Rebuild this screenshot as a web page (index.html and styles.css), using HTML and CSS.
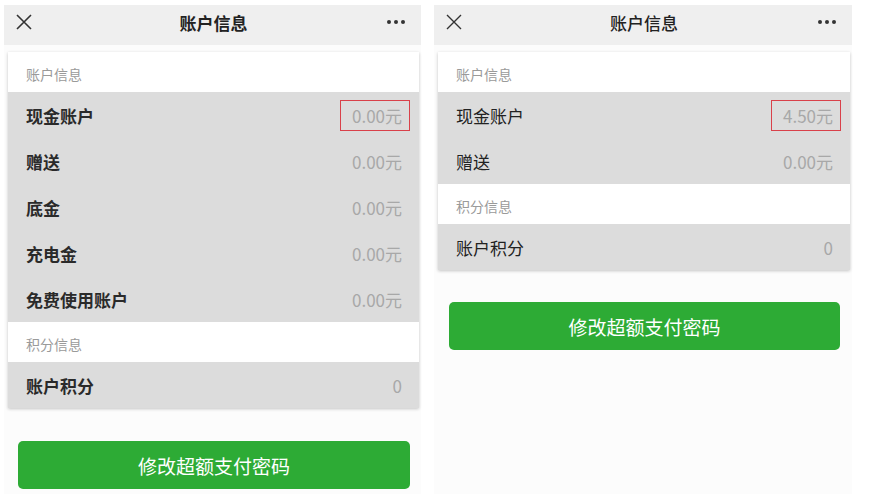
FILE: index.html
```html
<!DOCTYPE html>
<html lang="zh-CN">
<head>
    <meta charset="UTF-8">
    <meta name="viewport" content="width=device-width, initial-scale=1.0">
    <title>账户信息</title>
    <link rel="stylesheet" href="styles.css">
</head>
<body>
    <div class="screens">
        <div class="phone bold">
            <div class="topbar">
                <svg class="close" width="16" height="16" viewBox="0 0 16 16"><path d="M1 1L15 15M15 1L1 15" stroke="#333" stroke-width="1.6" fill="none"/></svg>
                <div class="title">账户信息</div>
                <div class="more"><span></span><span></span><span></span></div>
            </div>
            <div class="card">
                <div class="section">账户信息</div>
                <div class="row"><span class="label">现金账户</span><span class="value mark">0.00元</span></div>
                <div class="row"><span class="label">赠送</span><span class="value">0.00元</span></div>
                <div class="row"><span class="label">底金</span><span class="value">0.00元</span></div>
                <div class="row"><span class="label">充电金</span><span class="value">0.00元</span></div>
                <div class="row"><span class="label">免费使用账户</span><span class="value">0.00元</span></div>
                <div class="section">积分信息</div>
                <div class="row"><span class="label">账户积分</span><span class="value">0</span></div>
            </div>
            <button class="pay-btn">修改超额支付密码</button>
        </div>

        <div class="phone">
            <div class="topbar">
                <svg class="close" width="16" height="16" viewBox="0 0 16 16"><path d="M1 1L15 15M15 1L1 15" stroke="#333" stroke-width="1.4" fill="none"/></svg>
                <div class="title">账户信息</div>
                <div class="more"><span></span><span></span><span></span></div>
            </div>
            <div class="card">
                <div class="section">账户信息</div>
                <div class="row"><span class="label">现金账户</span><span class="value mark">4.50元</span></div>
                <div class="row"><span class="label">赠送</span><span class="value">0.00元</span></div>
                <div class="section">积分信息</div>
                <div class="row"><span class="label">账户积分</span><span class="value">0</span></div>
            </div>
            <button class="pay-btn">修改超额支付密码</button>
        </div>
    </div>
</body>
</html>
```

FILE: styles.css
```css
body {
    margin: 0;
    background-color: #ffffff;
    font-family: "Noto Sans CJK SC", "Noto Sans", sans-serif;
    color: #222;
}

.screens {
    display: flex;
    align-items: stretch;
    height: 494px;
    padding-top: 5px;
    box-sizing: border-box;
}

.phone {
    width: 417px;
    margin-left: 4px;
    background-color: #fcfcfc;
    display: flex;
    flex-direction: column;
}

.phone + .phone {
    width: 418px;
    margin-left: 13px;
}

.topbar {
    height: 40px;
    box-sizing: border-box;
    background-color: #efefef;
    display: flex;
    align-items: center;
    padding: 0 16px 6px 12px;
}

.close {
    flex: none;
}

.title {
    flex: 1;
    text-align: center;
    font-size: 17px;
    font-weight: 700;
    color: #222;
    padding-left: 8px;
}

.phone + .phone .title {
    font-weight: 500;
}

.more {
    display: flex;
    gap: 3px;
}

.more span {
    width: 4px;
    height: 4px;
    border-radius: 50%;
    background-color: #333;
}

.card {
    margin: 7px 2px 0 4px;
    background-color: #fff;
    box-shadow: 0 1px 3px rgba(0, 0, 0, 0.22);
}

.section {
    height: 40px;
    box-sizing: border-box;
    display: flex;
    align-items: center;
    padding: 4px 18px 0;
    font-size: 14px;
    color: #9a9a9a;
    background-color: #fff;
}

.row {
    height: 46px;
    display: flex;
    align-items: center;
    justify-content: space-between;
    padding: 0 17px 0 18px;
    background-color: #dcdcdc;
}

.label {
    font-size: 17px;
    color: #222;
}

.bold .label {
    font-weight: 700;
    color: #2a2a2a;
}

.value {
    font-size: 17px;
    color: #a8a8a8;
}

.mark {
    border: 1.5px solid #d9414a;
    padding: 2px 7px 2px 11px;
    margin-right: -8px;
}

.pay-btn {
    margin: 33px 11px 0 14px;
    height: 48px;
    border: none;
    border-radius: 5px;
    background-color: #2dab35;
    color: #fff;
    font-family: "Noto Sans CJK SC", "Noto Sans", sans-serif;
    font-size: 19px;
}

.phone + .phone .pay-btn {
    margin: 32px 12px 0 15px;
}
```
